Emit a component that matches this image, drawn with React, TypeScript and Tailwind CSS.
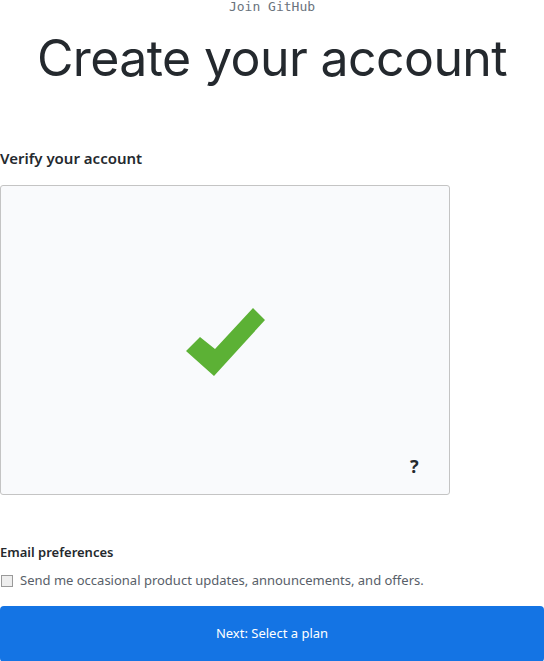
import React from "react";

export default function App() {
  return (
    <div className="w-[544px] h-[661px] overflow-hidden bg-white" style={{ fontFamily: '"Noto Sans", sans-serif' }}>
      <div className="flex flex-col">
        <p className="text-center text-[13px] leading-[14px] text-[#6a737d]" style={{ fontFamily: '"DejaVu Sans Mono", monospace' }}>
          Join GitHub
        </p>
        <h1 className="mt-[14px] text-center text-[50px] leading-[60px] tracking-[-0.6px] font-normal text-[#24292e]" style={{ fontFamily: 'Inter, sans-serif' }}>
          Create your account
        </h1>

        <h2 className="mt-[60px] text-[15px] leading-[20px] font-semibold text-[#24292e]">Verify your account</h2>
        <div className="relative mt-[17px] w-[450px] h-[310px] rounded-[3px] border border-[#c4c4c4] bg-[#f9fafc] flex items-center justify-center">
          <svg width="79" height="68" viewBox="0 0 79 68" className="mt-[4px] ml-[1px]">
            <polygon points="0,43 14,29 29,41 67,0 79,12 28,68" fill="#5cb135" />
          </svg>
          <span className="absolute left-[409px] top-[267px] text-[18px] font-bold text-[#24292e]">?</span>
        </div>

        <h3 className="mt-[48px] text-[13px] leading-[18px] font-semibold text-[#24292e]">Email preferences</h3>
        <label className="mt-[10px] flex items-center gap-[7px] text-[13px] text-[#586069]">
          <span className="ml-[1px] w-[12px] h-[12px] border border-[#9a9a9a] bg-[#eeeeee]" />
          Send me occasional product updates, announcements, and offers.
        </label>
        <button className="mt-[15px] w-[544px] h-[56px] rounded-[4px] bg-[#1474e4] text-white text-[13px] text-center">
          Next: Select a plan
        </button>
      </div>
    </div>
  );
}
